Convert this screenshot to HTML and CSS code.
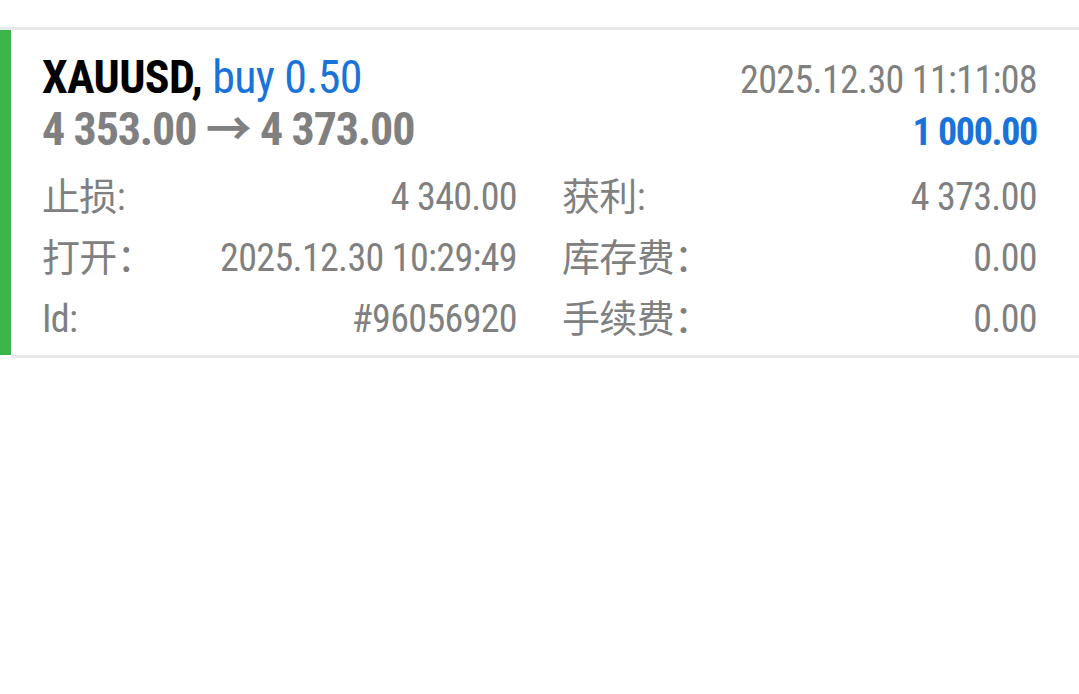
FILE: index.html
```html
<!DOCTYPE html>
<html lang="zh-CN">
<head>
  <meta charset="UTF-8" />
  <meta name="viewport" content="width=device-width, initial-scale=1.0"/>
  <title>XAUUSD</title>
  <link rel="stylesheet" href="styles.css">
</head>
<body>
  <div class="list">
    <div class="deal">
      <div class="deal-head">
        <div class="head-row">
          <div class="title"><span class="symbol">XAUUSD,</span> <span class="side">buy 0.50</span></div>
          <div class="time">2025.12.30 11:11:08</div>
        </div>
        <div class="head-row">
          <div class="prices">4 353.00 → 4 373.00</div>
          <div class="profit">1 000.00</div>
        </div>
      </div>
      <div class="deal-grid">
        <div class="field"><span class="label">止损:</span><span class="value">4 340.00</span></div>
        <div class="field"><span class="label">获利:</span><span class="value">4 373.00</span></div>
        <div class="field"><span class="label">打开：</span><span class="value">2025.12.30 10:29:49</span></div>
        <div class="field"><span class="label">库存费：</span><span class="value">0.00</span></div>
        <div class="field"><span class="label">Id:</span><span class="value">#96056920</span></div>
        <div class="field"><span class="label">手续费：</span><span class="value">0.00</span></div>
      </div>
    </div>
  </div>
</body>
</html>
```

FILE: styles.css
```css
* { margin: 0; padding: 0; box-sizing: border-box; }
body {
  font-family: Roboto, "Noto Sans CJK SC", sans-serif;
  font-stretch: 75%;
  letter-spacing: -0.04em;
  background: white;
  color: #808080;
}

.list { padding-top: 27px; }

.deal {
  border-top: 3px solid #e8e8e8;
  display: flex; flex-direction: column;
}

.deal-head, .deal-grid {
  border-left: 11px solid #3bb54a;
  padding: 0 42px 0 31px;
}

.deal-head { padding-top: 21px; }

.head-row {
  display: flex; justify-content: space-between; align-items: baseline;
  height: 52px; line-height: 52px;
}

.title { font-size: 46px; }
.symbol { color: black; font-weight: 700; }
.side { color: #1a73d8; }
.prices { font-size: 46px; font-weight: 700; letter-spacing: -0.025em; }

.time { font-size: 38px; }
.profit { font-size: 38px; font-weight: 700; color: #1a73d8; letter-spacing: -0.035em; }

.deal-grid {
  display: grid; grid-template-columns: 1fr 1fr;
  column-gap: 45px;
  padding-top: 12px; padding-bottom: 5px;
}

.field {
  display: flex; justify-content: space-between;
  font-size: 38px; line-height: 61px;
}

.deal::after {
  content: ""; display: block;
  margin-left: 11px;
  border-bottom: 3px solid #e8e8e8;
}
```
